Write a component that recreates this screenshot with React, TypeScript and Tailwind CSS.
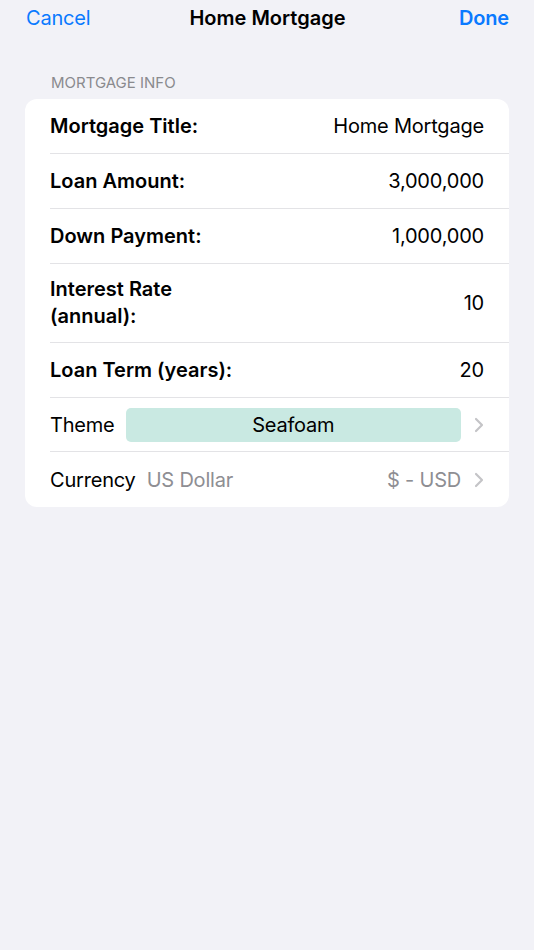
const rows = [
  { label: "Mortgage Title:", value: "Home Mortgage", tall: false },
  { label: "Loan Amount:", value: "3,000,000", tall: false },
  { label: "Down Payment:", value: "1,000,000", tall: false },
  { label: "Interest Rate\n(annual):", value: "10", tall: true },
  { label: "Loan Term (years):", value: "20", tall: false },
];

function Chevron() {
  return (
    <svg width="10" height="16" viewBox="0 0 10 16" className="shrink-0 ml-[13px]">
      <path d="M2 2l6 6-6 6" fill="none" stroke="#c4c4c7" strokeWidth="2.2" strokeLinecap="round" strokeLinejoin="round" />
    </svg>
  );
}

export default function App() {
  return (
    <div className="min-h-[950px] bg-[#f2f2f7] font-['Inter','Liberation_Sans',sans-serif] text-[20px] text-black">
      {/* nav bar */}
      <div className="grid grid-cols-[1fr_auto_1fr] items-center pl-[26px] pr-[25px] h-[35px]">
        <button className="justify-self-start text-[#0a7aff] tracking-[-0.2px]">Cancel</button>
        <h1 className="font-semibold">Home Mortgage</h1>
        <button className="justify-self-end text-[#0a7aff] font-semibold tracking-[-0.2px]">Done</button>
      </div>

      <p className="mt-[39px] pl-[51px] text-[15px] leading-[18px] text-[#8a8a8e] uppercase">Mortgage Info</p>

      <div className="mx-[25px] mt-[7px] bg-white rounded-[12px] overflow-hidden">
        {rows.map((r) => (
          <div key={r.label} className="pl-[25px]">
            <div
              className={
                r.tall
                  ? "flex items-center justify-between pr-[25px] py-[12px] border-b border-[#e3e3e6] leading-[27px]"
                  : "flex items-center justify-between pr-[25px] py-[15px] border-b border-[#e3e3e6] leading-[24px]"
              }
            >
              <span className="font-semibold whitespace-pre-line">{r.label}</span>
              <span className="tracking-[-0.2px]">{r.value}</span>
            </div>
          </div>
        ))}

        <div className="pl-[25px]">
          <div className="flex items-center pr-[25px] h-[54px] border-b border-[#e3e3e6]">
            <span className="tracking-[-0.2px]">Theme</span>
            <div className="flex-1 ml-[11px] h-[34px] rounded-[5px] bg-[#c9e9e2] flex items-center justify-center tracking-[-0.2px]">
              Seafoam
            </div>
            <Chevron />
          </div>
        </div>

        <div className="pl-[25px]">
          <div className="flex items-center pr-[25px] h-[55px]">
            <span className="tracking-[-0.2px]">Currency</span>
            <span className="ml-[11px] text-[#8e8e93] tracking-[-0.2px]">US Dollar</span>
            <span className="ml-auto text-[#8e8e93] tracking-[-0.2px]">$ - USD</span>
            <Chevron />
          </div>
        </div>
      </div>
    </div>
  );
}
